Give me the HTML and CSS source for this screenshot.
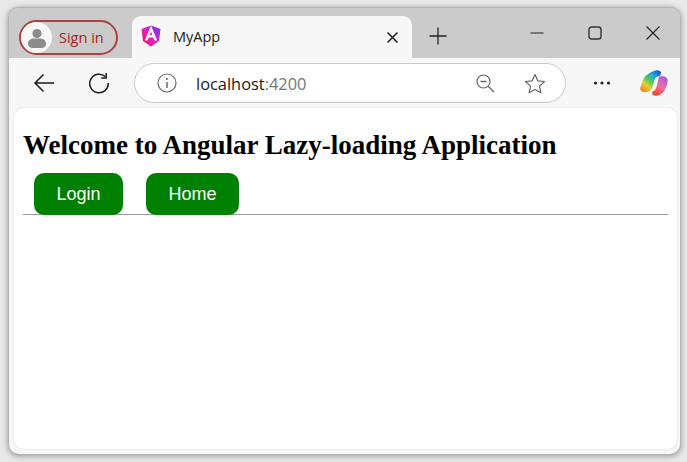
FILE: index.html
```html
<!DOCTYPE html>
<html lang="en">
<head>
<meta charset="utf-8">
<title>MyApp</title>
<link rel="stylesheet" href="styles.css">
</head>
<body>
<div class="window">
  <div class="tabstrip">
    <div class="signin">
      <span class="avatar">
        <svg width="24" height="24" viewBox="0 0 24 24"><circle cx="12" cy="7.5" r="4.6" fill="#8c8c8c"/><path d="M3 18c0-4 3-5.500 5.500-5.500h7c2.500 0 5.500 1.500 5.500 5.500 0 2.600-2.500 4-5 4H8c-2.500 0-5-1.400-5-4z" fill="#8c8c8c"/></svg>
      </span>
      <span class="signin-label">Sign in</span>
    </div>
    <div class="tab">
      <svg class="favicon" width="20" height="22" viewBox="0 0 20 22">
        <defs><linearGradient id="ng" x1="0.100" y1="0.900" x2="1" y2="0.200"><stop offset="0" stop-color="#f2104f"/><stop offset="0.45" stop-color="#e81fc0"/><stop offset="1" stop-color="#8030f0"/></linearGradient></defs>
        <path d="M10 0.500 0.500 4 2 16l8 5.500L18 16l1.500-12z" fill="url(#ng)"/>
        <path d="M10 0.500 3.800 15.500h2.700l1.200-3h4.600l1.200 3h2.700z" fill="#fff"/>
        <path d="M8.700 10h2.600L10 6.800z" fill="#e01f90"/>
      </svg>
      <span class="tab-title">MyApp</span>
      <svg class="tab-close" width="11" height="11" viewBox="0 0 11 11"><path d="M0.500 0.500l10 10M10.500 0.500l-10 10" stroke="#1a1a1a" stroke-width="1.500" fill="none"/></svg>
    </div>
    <svg class="newtab" width="18" height="18" viewBox="0 0 18 18"><path d="M9 0.500v17M0.500 9h17" stroke="#222" stroke-width="1.300" fill="none"/></svg>
    <div class="caption">
      <svg width="14" height="14" viewBox="0 0 14 14"><path d="M0.500 7h13" stroke="#222" stroke-width="1.200" fill="none"/></svg>
      <svg width="14" height="14" viewBox="0 0 14 14"><rect x="1" y="1" width="12" height="12" rx="2.500" stroke="#333" stroke-width="1.400" fill="none"/></svg>
      <svg width="14" height="14" viewBox="0 0 14 14"><path d="M0.500 0.500l13 13M13.500 0.500l-13 13" stroke="#222" stroke-width="1.100" fill="none"/></svg>
    </div>
  </div>
  <div class="toolbar">
    <svg class="back" width="22" height="20" viewBox="0 0 22 20"><path d="M21 10H2M10.500 1.500 2 10l8.500 8.500" stroke="#1c1c1c" stroke-width="1.500" fill="none"/></svg>
    <svg class="reload" width="22" height="22" viewBox="0 0 22 22"><path d="M17.500 4.800A9.300 9.300 0 1 0 20.300 11" stroke="#1c1c1c" stroke-width="1.500" fill="none"/><path d="M18.200 1v5h-5" stroke="#1c1c1c" stroke-width="1.500" fill="none"/></svg>
    <div class="omnibox">
      <svg class="info" width="20" height="20" viewBox="0 0 20 20"><circle cx="10" cy="10" r="9" stroke="#6e6e6e" stroke-width="1.200" fill="none"/><path d="M10 9v6" stroke="#555" stroke-width="1.300"/><circle cx="10" cy="6" r="0.900" fill="#555"/></svg>
      <span class="url">localhost<span class="port">:4200</span></span>
      <svg class="zoom-icon" width="19" height="19" viewBox="0 0 19 19"><circle cx="7.500" cy="7.500" r="6.500" stroke="#666" stroke-width="1.200" fill="none"/><path d="M4.500 7.500h6M12.200 12.200 18 18" stroke="#666" stroke-width="1.300" fill="none"/></svg>
      <svg class="star" width="22" height="21" viewBox="0 0 22 21"><path d="M11 1.500l2.800 6.300 6.700.7-5 4.600 1.400 6.700L11 16.400l-5.900 3.400 1.400-6.700-5-4.600 6.700-.7z" stroke="#666" stroke-width="1.200" stroke-linejoin="round" fill="none"/></svg>
    </div>
    <svg class="more" width="18" height="4" viewBox="0 0 18 4"><circle cx="2.500" cy="2" r="1.600" fill="#222"/><circle cx="9" cy="2" r="1.600" fill="#222"/><circle cx="15.500" cy="2" r="1.600" fill="#222"/></svg>
    <svg class="copilot" width="28" height="27" viewBox="0 0 28 27">
      <defs>
        <linearGradient id="cpa" x1="0.100" y1="0.900" x2="0.800" y2="0"><stop offset="0" stop-color="#f08a2a"/><stop offset="0.25" stop-color="#e8d030"/><stop offset="0.5" stop-color="#4cc860"/><stop offset="0.75" stop-color="#1fa8e0"/><stop offset="1" stop-color="#1a5fd0"/></linearGradient>
        <linearGradient id="cpb" x1="0.300" y1="1" x2="0.800" y2="0"><stop offset="0" stop-color="#f0452a"/><stop offset="0.45" stop-color="#f0709c"/><stop offset="1" stop-color="#a85ce8"/></linearGradient>
      </defs>
      <path d="M14 1C17-.5 21 .5 21 3l-1 3c-3 0-4.500 1-5.500 4L12 18c-1 3-3 4-6 4H4c-3 0-4.500-2-3.500-5L3 10C5 5 9 3 14 1z" fill="url(#cpa)"/>
      <path d="M19 6.500c4-1 9 0 8.800 4.500-.3 3-1.800 7-3.300 9.500-2.500 4-6.500 6-10 5-2.500-.5-2.500-2.500-2-4 2.500-1 3.500-2.500 4-4.500l1.500-6c.5-2 .5-3.500 1-4.500z" fill="url(#cpb)"/>
    </svg>
  </div>
  <main class="page">
    <h2 class="title">Welcome to Angular Lazy-loading Application</h2>
    <nav class="nav">
      <a class="btn btn-login">Login</a>
      <a class="btn btn-home">Home</a>
    </nav>
  </main>
</div>
</body>
</html>
```
FILE: styles.css
```css
* { box-sizing: border-box; }
html, body { margin: 0; height: 100%; }
body {
  width: 687px;
  height: 462px;
  overflow: hidden;
  padding: 8px 7px 8px 9px;
  background: #e9e9e9;
}
.window {
  height: 446px;
  display: flex;
  flex-direction: column;
  background: #f7f7f7;
  border-radius: 10px;
  overflow: hidden;
  box-shadow: 0 0 0 1px #b4b4b4, 0 1px 5px 2px #a8a8a8;
  font-family: "Segoe UI", "Open Sans", "Noto Sans", sans-serif;
}
.tabstrip {
  height: 50px;
  flex: none;
  background: #cbcbcb;
  display: flex;
  align-items: flex-start;
  padding: 8px 0 0 10px;
}
.signin {
  width: 99px;
  height: 35px;
  margin-top: 4px;
  border: 2px solid #b04040;
  border-radius: 18px;
  display: flex;
  align-items: center;
  color: #a02626;
  font-size: 14.500px;
}
.avatar {
  width: 31px;
  height: 31px;
  border-radius: 50%;
  background: #f7f7f7;
  display: flex;
  align-items: center;
  justify-content: center;
}
.signin-label { margin-left: 7px; }
.tab {
  width: 280px;
  height: 42px;
  margin-left: 14px;
  background: #f7f7f7;
  border-radius: 9px 9px 0 0;
  display: flex;
  align-items: center;
  padding: 0 14px 0 9px;
}
.favicon { flex: none; margin-top: -2px; }
.tab-title { margin-left: 12px; font-size: 14.500px; color: #1a1a1a; flex: 1; margin-top: -2px; }
.tab-close { flex: none; }
.newtab { margin: 11px 0 0 17px; }
.caption {
  margin-left: auto;
  display: flex;
  gap: 44px;
  padding: 10px 20px 0 0;
}
.toolbar {
  height: 50px;
  flex: none;
  background: #f7f7f7;
  display: flex;
  align-items: center;
  padding: 0 0 0 24px;
}
.back { flex: none; }
.reload { flex: none; margin-left: 33px; }
.omnibox {
  width: 432px;
  height: 40px;
  margin-left: 24px;
  background: #fff;
  border: 1px solid #c9c9c9;
  border-radius: 20px;
  display: flex;
  align-items: center;
  padding: 0 19px 0 22px;
  font-size: 16.400px;
}
.url { margin-left: 19px; color: #1c1c1c; flex: 1; }
.port { color: #767676; }
.zoom-icon { flex: none; margin-right: 29px; }
.star { flex: none; }
.more { flex: none; margin-left: 27px; }
.copilot { flex: none; margin-left: 29px; }
.page {
  flex: 1;
  margin: 0 3px 5px 5px;
  padding: 0 9px;
  background: #fff;
  border-radius: 10px;
  box-shadow: 0 0 2px #d5d5d5;
}
.title {
  margin: 0;
  padding-top: 22px;
  font-family: "Liberation Serif", "Times New Roman", serif;
  font-size: 27px;
  line-height: 31px;
  font-weight: bold;
  color: #000;
}
.nav {
  display: flex;
  gap: 23px;
  margin-top: 12px;
  padding-left: 11px;
  border-bottom: 1px solid #999;
  height: 42px;
}
.btn {
  height: 42px;
  background: #008000;
  color: #fff;
  font-family: "Liberation Sans", Arial, sans-serif;
  font-size: 18px;
  line-height: 42px;
  text-align: center;
  border-radius: 10px;
}
.btn-login { width: 89px; }
.btn-home { width: 93px; }
```
